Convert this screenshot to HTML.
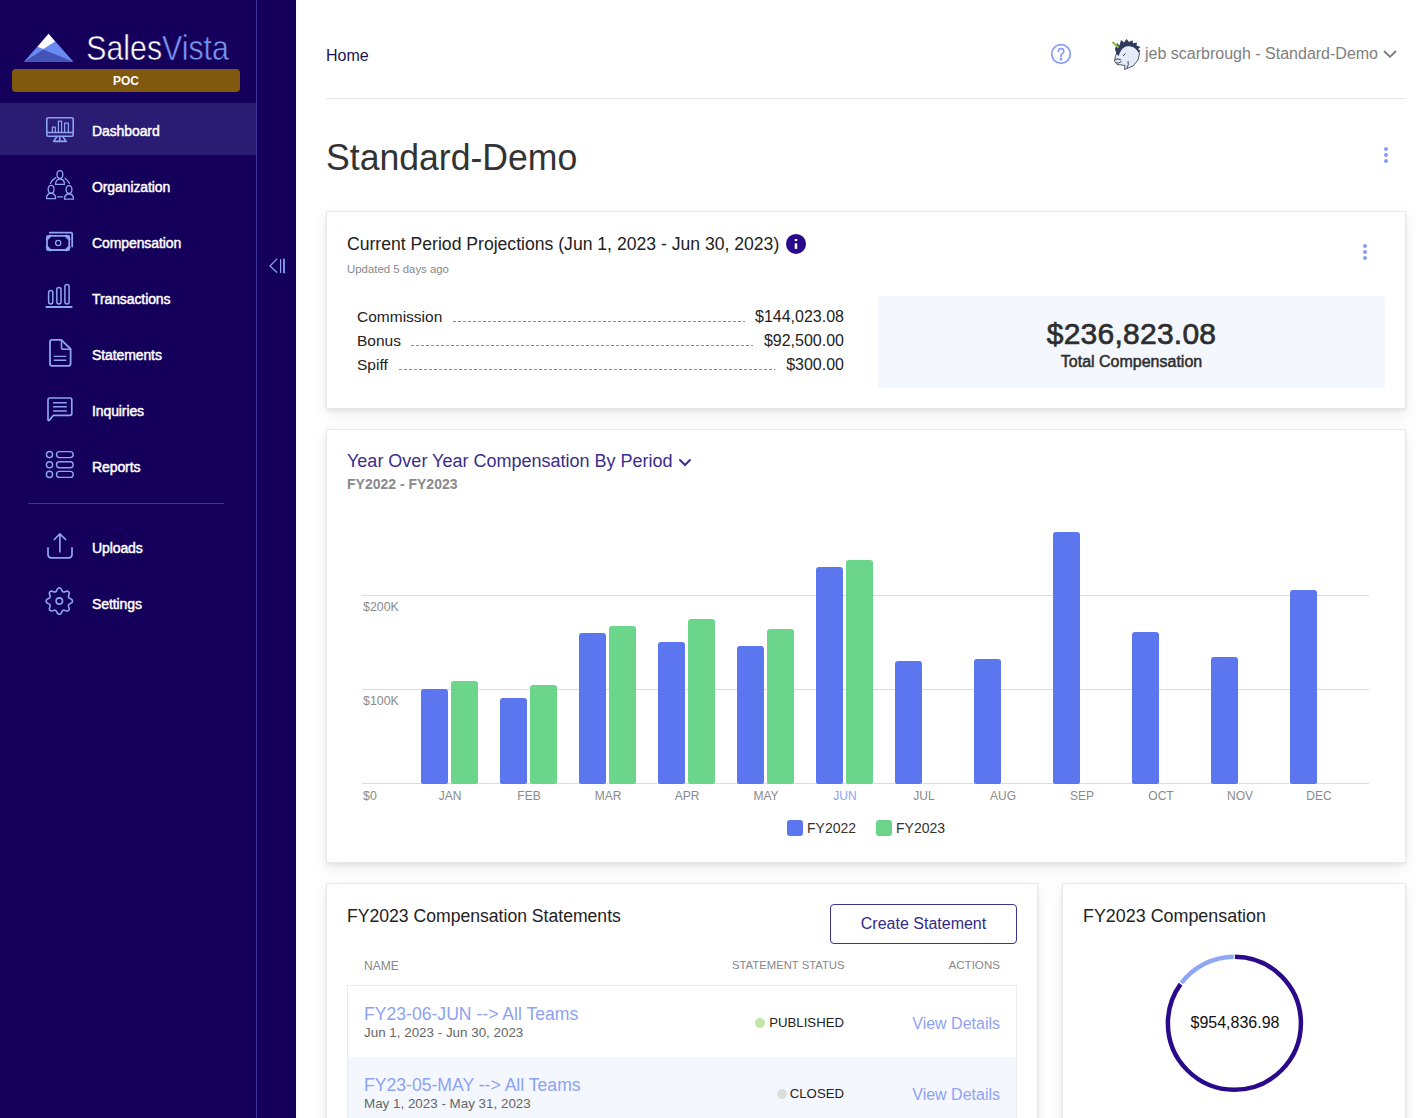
<!DOCTYPE html>
<html><head><meta charset="utf-8">
<style>
*{box-sizing:border-box;margin:0;padding:0}
html,body{width:1416px;height:1118px;overflow:hidden;background:#fff;font-family:"Liberation Sans",sans-serif}
.abs{position:absolute}
#sb{position:absolute;left:0;top:0;width:296px;height:1118px;background:#14005a}
#sbline{position:absolute;left:256px;top:0;width:1px;height:1118px;background:#3c3592}
.nav{position:absolute;left:0;width:256px;height:52px}
.nav.active{background:#2a1c72}
.lbl{position:absolute;left:92px;color:#fff;font-size:14px;font-weight:normal;-webkit-text-stroke:0.45px #fff;white-space:nowrap;line-height:16px;letter-spacing:-0.1px}
.card{position:absolute;background:#fff;border:1px solid #e8e8e8;box-shadow:0 2px 4px rgba(0,0,0,0.07),0 6px 16px rgba(0,0,0,0.07)}
.t{position:absolute;white-space:nowrap}
.bar{position:absolute;width:27px;border-radius:3px 3px 2px 2px}
.mlbl{position:absolute;top:789px;width:60px;text-align:center;font-size:12px;line-height:14px}
.grid{position:absolute;left:362px;width:1007px;height:1px;background:#dcdcdc}
.ylbl{position:absolute;left:363px;font-size:12.4px;line-height:14px;color:#8a8a8a}
.dots{position:absolute;height:1px;background-image:linear-gradient(to right,#8a8a8a 0,#8a8a8a 3px,transparent 3px);background-size:5px 1px;background-repeat:repeat-x}
.kebab{position:absolute;width:4px}
.kebab i{display:block;width:4px;height:4px;border-radius:2px;background:#8a9cf6;margin-bottom:2px}
</style></head>
<body>
<div id="sb">
  <div id="sbline"></div>
  <div class="nav active" style="top:103px"></div>
  <!-- logo -->
  <svg class="abs" style="left:0;top:0" width="256" height="100">
    <polygon points="24,61.8 48.6,33.8 73.4,61.8" fill="#6a8af2"/>
    <polygon points="24,61.8 43.3,49.4 73.4,61.8" fill="#4453b8"/>
    <polygon points="48.6,33.8 55,41.4 43.3,49.1 37.6,46.7" fill="#ffffff"/>
    <text x="86.3" y="59.6" font-family="Liberation Sans" font-size="35.5" textLength="142.5" lengthAdjust="spacingAndGlyphs" fill="#ffffff" stroke="#14005a" stroke-width="0.55">Sales<tspan fill="#7b95f2">Vista</tspan></text>
  </svg>
  <div class="abs" style="left:12px;top:69px;width:228px;height:23px;background:#80590f;border-radius:4px;color:#fff;font-size:12px;font-weight:bold;text-align:center;line-height:25px">POC</div>
  
<svg class="abs" style="left:0;top:0" width="256" height="640" fill="none" stroke="#8da3f5" stroke-width="1.6" stroke-linecap="round" stroke-linejoin="round">
 <g transform="translate(40,110)">
  <rect x="6.8" y="7.8" width="26.4" height="18.4" rx="1.5"/>
  <line x1="7" y1="22.5" x2="33" y2="22.5"/>
  <rect x="12.4" y="17.2" width="3" height="5.3" stroke-width="1.2"/>
  <rect x="18.4" y="11.2" width="3.2" height="11.3" stroke-width="1.2"/>
  <rect x="24.6" y="13.2" width="3.8" height="9.3" stroke-width="1.2"/>
  <path d="M17,26.5 L13.6,31.4 L26.2,31.4 L22.8,26.5 M19.8,26.5 L19.8,31"/>
 </g>
 <g transform="translate(40,166)" stroke-width="1.3">
  <ellipse cx="19.9" cy="8.6" rx="2.9" ry="3.9"/>
  <path d="M15.5,18.4 C15.5,14.8 17.5,13 19.9,13 C22.3,13 24.5,14.8 24.5,18.4 Z"/>
  <ellipse cx="11.1" cy="23.2" rx="2.9" ry="3.9"/>
  <path d="M6.5,32.6 C6.5,29.2 8.7,27.4 11.1,27.4 C13.5,27.4 15.6,29.2 15.6,32.6 Z"/>
  <ellipse cx="29" cy="23.6" rx="2.9" ry="3.9"/>
  <path d="M24.5,33.2 C24.5,29.8 26.6,28 29,28 C31.4,28 33.5,29.8 33.5,33.2 Z"/>
  <path d="M10.4,17.5 Q12.5,13.5 15.7,11.6"/>
  <path d="M25,12.2 Q28,14.2 29.5,17.6"/>
  <path d="M17.4,30.8 L22.6,30.8"/>
 </g>
 <g transform="translate(40,222)" stroke-width="1.8">
  <rect x="7" y="13.9" width="22.2" height="14.1" rx="1"/>
  <path d="M9.8,10.6 L31,10.6 Q32.2,10.6 32.2,11.8 L32.2,24.6"/>
  <circle cx="18.2" cy="21" r="2.6" stroke-width="1.3"/>
  <path d="M7,17 L10,14 M26.2,14 L29.2,17 M7,25 L10,28 M26.2,28 L29.2,25" stroke-width="2.6"/>
 </g>
 <g transform="translate(40,278)" stroke-width="1.5">
  <rect x="8.6" y="12.6" width="4.2" height="13.3" rx="2.1"/>
  <rect x="16.8" y="9.4" width="4.2" height="16.5" rx="2.1"/>
  <rect x="24.9" y="6.4" width="4.2" height="19.5" rx="2.1"/>
  <line x1="6.4" y1="29" x2="31.6" y2="29" stroke-width="2"/>
 </g>
 <g transform="translate(40,334)">
  <path d="M21.3,5.9 L12,5.9 Q10,5.9 10,7.9 L10,29.8 Q10,31.8 12,31.8 L28.6,31.8 Q30.6,31.8 30.6,29.8 L30.6,15 Z" stroke-width="1.8"/>
  <path d="M21.5,6.5 L21.5,13.4 Q21.5,15.2 23.3,15.2 L30.2,15.2" stroke-width="1.5"/>
  <line x1="14.3" y1="22.4" x2="25.8" y2="22.4" stroke-width="1.4"/>
  <line x1="14.3" y1="26.3" x2="25.8" y2="26.3" stroke-width="1.4"/>
 </g>
 <g transform="translate(40,390)">
  <path d="M10,8 L30,8 Q31.8,8 31.8,9.8 L31.8,23.6 Q31.8,25.4 30,25.4 L13.2,25.4 L9.6,30 Q8,31.4 8,29.4 L8,10 Q8,8 10,8 Z" stroke-width="1.7"/>
  <line x1="13.6" y1="12.7" x2="26.3" y2="12.7" stroke-width="1.5"/>
  <line x1="13.6" y1="16.8" x2="26.3" y2="16.8" stroke-width="1.5"/>
  <line x1="13.6" y1="20.9" x2="26.3" y2="20.9" stroke-width="1.5"/>
 </g>
 <g transform="translate(40,446)" stroke-width="1.4">
  <circle cx="9.5" cy="8.6" r="3.1"/><circle cx="9.5" cy="18.8" r="3.1"/><circle cx="9.5" cy="28.4" r="3.1"/>
  <rect x="16.5" y="5.6" width="16.7" height="6" rx="3"/>
  <rect x="16.5" y="15.8" width="16.7" height="6" rx="3"/>
  <rect x="16.5" y="25.4" width="16.7" height="6" rx="3"/>
 </g>
 <g transform="translate(40,527)" stroke-width="1.7">
  <path d="M19.9,24.7 L19.9,6.9 M14.3,12.5 L19.9,6.9 L25.6,12.5"/>
  <path d="M8,20.9 L8,27.6 Q8,30.9 11.3,30.9 L28.7,30.9 Q32,30.9 32,27.6 L32,20.9"/>
 </g>
 <g transform="translate(40,583)" stroke-width="1.6">
  <path d="M19.30,4.90 L20.15,5.09 L20.94,5.66 L21.56,6.72 L22.06,7.81 L22.57,8.48 L23.13,8.86 L23.80,8.98 L24.62,8.88 L25.74,8.45 L26.94,8.14 L27.90,8.30 L28.63,8.77 L29.10,9.50 L29.26,10.46 L28.95,11.66 L28.52,12.78 L28.42,13.60 L28.54,14.27 L28.92,14.83 L29.59,15.34 L30.68,15.84 L31.74,16.46 L32.31,17.25 L32.50,18.10 L32.31,18.95 L31.74,19.74 L30.68,20.36 L29.59,20.86 L28.92,21.37 L28.54,21.93 L28.42,22.60 L28.52,23.42 L28.95,24.54 L29.26,25.74 L29.10,26.70 L28.63,27.43 L27.90,27.90 L26.94,28.06 L25.74,27.75 L24.62,27.32 L23.80,27.22 L23.13,27.34 L22.57,27.72 L22.06,28.39 L21.56,29.48 L20.94,30.54 L20.15,31.11 L19.30,31.30 L18.45,31.11 L17.66,30.54 L17.04,29.48 L16.54,28.39 L16.03,27.72 L15.47,27.34 L14.80,27.22 L13.98,27.32 L12.86,27.75 L11.66,28.06 L10.70,27.90 L9.97,27.43 L9.50,26.70 L9.34,25.74 L9.65,24.54 L10.08,23.42 L10.18,22.60 L10.06,21.93 L9.68,21.37 L9.01,20.86 L7.92,20.36 L6.86,19.74 L6.29,18.95 L6.10,18.10 L6.29,17.25 L6.86,16.46 L7.92,15.84 L9.01,15.34 L9.68,14.83 L10.06,14.27 L10.18,13.60 L10.08,12.78 L9.65,11.66 L9.34,10.46 L9.50,9.50 L9.97,8.77 L10.70,8.30 L11.66,8.14 L12.86,8.45 L13.98,8.88 L14.80,8.98 L15.47,8.86 L16.03,8.48 L16.54,7.81 L17.04,6.72 L17.66,5.66 L18.45,5.09Z"/>
  <circle cx="19.3" cy="18.1" r="3.2"/>
 </g>
</svg>
  <span class="lbl" style="top:123px">Dashboard</span>
  <span class="lbl" style="top:179px">Organization</span>
  <span class="lbl" style="top:235px">Compensation</span>
  <span class="lbl" style="top:291px">Transactions</span>
  <span class="lbl" style="top:347px">Statements</span>
  <span class="lbl" style="top:403px">Inquiries</span>
  <span class="lbl" style="top:459px">Reports</span>
  <div class="abs" style="left:28px;top:503px;width:196px;height:1px;background:#3c3592"></div>
  <span class="lbl" style="top:540px">Uploads</span>
  <span class="lbl" style="top:596px">Settings</span>
  <svg class="abs" style="left:260px;top:250px" width="36" height="32" fill="none" stroke="#8ba1f5" stroke-width="1.2" stroke-linecap="round" stroke-linejoin="round">
    <path d="M16.7,9.2 L10,16 L16.7,22.3"/>
    <line x1="20.6" y1="9.5" x2="20.6" y2="22.5"/>
    <line x1="24" y1="9.5" x2="24" y2="22.5" stroke-width="1.8"/>
  </svg>
</div>

<!-- header -->
<div class="t" style="left:326px;top:46.5px;font-size:16px;line-height:18px;color:#1a1450">Home</div>
<svg class="abs" style="left:1048px;top:41px" width="26" height="26" fill="none" stroke="#8a9cf8" stroke-width="1.7">
  <circle cx="13" cy="13" r="9.3"/>
  <path d="M10.3,10.6 Q10.3,7.6 13,7.6 Q15.8,7.6 15.8,10.2 Q15.8,12 13.9,12.9 Q13,13.4 13,14.8 L13,15.6" stroke-linecap="round"/>
  <circle cx="13" cy="18.3" r="0.6" fill="#8a9cf8"/>
</svg>
<svg class="abs" style="left:1110px;top:37px" width="32" height="34">
  <path d="M9,12 L17,8 L25,10 L29.5,16 L28,23 L23,29 L14.5,32.5 L15,28.5 L12,28 L7,27.5 L4.5,24 L5.5,19 L7,15 Z" fill="#e6ebf9" stroke="#2b2f45" stroke-width="0.8" stroke-linejoin="round"/>
  <path d="M5,12 L7,6 L9.5,8.5 L11,3 L14,5.5 L16.5,2 L19,5 L22.5,3.2 L23,6.3 L27,5.5 L26.5,8.5 L30.5,10 L28,12 L30.5,14 L28.5,15.5 L27,13 L24,10.5 L20,9 L15.5,9.5 L12,12 L10,15.5 L8.5,19 L6.5,17 Z" fill="#2f3a5f"/>
  <path d="M2.5,5 L8.5,10.5" stroke="#8bc34a" stroke-width="2.2"/>
  <path d="M5,22.5 Q8,21 11,23 M6,26 Q9,26.5 11.5,24.5 M13,19 L15.5,16.5 M18,24 Q19,28 17,31" stroke="#2b2f45" stroke-width="0.9" fill="none"/>
</svg>
<div class="t" style="left:1145px;top:45px;font-size:16px;line-height:18px;color:#808080">jeb scarbrough - Standard-Demo</div>
<svg class="abs" style="left:1382px;top:48px" width="16" height="12" fill="none" stroke="#777" stroke-width="1.8" stroke-linecap="round"><path d="M2.5,3.5 L8,8.8 L13.5,3.5"/></svg>
<div class="abs" style="left:326px;top:98px;width:1080px;height:1px;background:#e6e6e6"></div>
<div class="t" style="left:326px;top:136.5px;font-size:37px;line-height:42px;color:#333;transform:scaleX(0.962);transform-origin:0 0">Standard-Demo</div>
<div class="kebab" style="left:1384px;top:147px"><i></i><i></i><i></i></div>

<!-- card 1 -->
<div class="card" style="left:326px;top:211px;width:1080px;height:198px"></div>
<div class="t" style="left:347px;top:234px;font-size:17.6px;line-height:20px;color:#222">Current Period Projections (Jun 1, 2023 - Jun 30, 2023)</div>
<svg class="abs" style="left:785px;top:233px" width="22" height="22"><circle cx="11" cy="10.9" r="10" fill="#290a8a"/><rect x="9.7" y="6" width="2.5" height="2" fill="#fff"/><rect x="9.7" y="10.3" width="2.5" height="5.6" fill="#fff"/></svg>
<div class="t" style="left:347px;top:262px;font-size:11.4px;line-height:14px;color:#888">Updated 5 days ago</div>
<div class="kebab" style="left:1363px;top:244px"><i></i><i></i><i></i></div>

<div class="t" style="left:357px;top:308px;font-size:15.5px;line-height:18px;color:#222">Commission</div>
<div class="dots" style="left:453px;top:321px;width:292px"></div>
<div class="t" style="left:743px;top:308px;width:101px;text-align:right;font-size:16px;line-height:18px;color:#222">$144,023.08</div>
<div class="t" style="left:357px;top:332px;font-size:15.5px;line-height:18px;color:#222">Bonus</div>
<div class="dots" style="left:411px;top:345px;width:342px"></div>
<div class="t" style="left:743px;top:332px;width:101px;text-align:right;font-size:16px;line-height:18px;color:#222">$92,500.00</div>
<div class="t" style="left:357px;top:356px;font-size:15.5px;line-height:18px;color:#222">Spiff</div>
<div class="dots" style="left:399px;top:369px;width:376px"></div>
<div class="t" style="left:743px;top:356px;width:101px;text-align:right;font-size:16px;line-height:18px;color:#222">$300.00</div>

<div class="abs" style="left:878px;top:296px;width:507px;height:92px;background:#f4f7fd"></div>
<div class="t" style="left:878px;top:317px;width:507px;text-align:center;font-size:30px;line-height:34px;font-weight:normal;-webkit-text-stroke:0.7px #2e2e2e;letter-spacing:0.25px;color:#2e2e2e">$236,823.08</div>
<div class="t" style="left:878px;top:353px;width:507px;text-align:center;font-size:16px;line-height:18px;font-weight:normal;-webkit-text-stroke:0.5px #2e2e2e;color:#2e2e2e">Total Compensation</div>

<!-- card 2 -->
<div class="card" style="left:326px;top:429px;width:1080px;height:434px"></div>
<div class="t" style="left:347px;top:451px;font-size:18px;line-height:20px;color:#3a2d8c">Year Over Year Compensation By Period</div>
<svg class="abs" style="left:677px;top:456px" width="16" height="14" fill="none" stroke="#3a2d8c" stroke-width="2" stroke-linecap="round"><path d="M3,4 L8,9 L13,4"/></svg>
<div class="t" style="left:347px;top:476px;font-size:14px;line-height:16px;font-weight:bold;color:#8a8a8a">FY2022 - FY2023</div>
<div class="grid" style="top:595px"></div>
<div class="grid" style="top:689px"></div>
<div class="grid" style="top:783px"></div>
<div class="ylbl" style="top:600px">$200K</div>
<div class="ylbl" style="top:694px">$100K</div>
<div class="ylbl" style="top:789px">$0</div>
<div class="bar" style="left:421px;top:689px;height:95px;background:#5b76ef"></div>
<div class="bar" style="left:500px;top:698px;height:86px;background:#5b76ef"></div>
<div class="bar" style="left:579px;top:633px;height:151px;background:#5b76ef"></div>
<div class="bar" style="left:658px;top:642px;height:142px;background:#5b76ef"></div>
<div class="bar" style="left:737px;top:646px;height:138px;background:#5b76ef"></div>
<div class="bar" style="left:816px;top:567px;height:217px;background:#5b76ef"></div>
<div class="bar" style="left:895px;top:661px;height:123px;background:#5b76ef"></div>
<div class="bar" style="left:974px;top:659px;height:125px;background:#5b76ef"></div>
<div class="bar" style="left:1053px;top:532px;height:252px;background:#5b76ef"></div>
<div class="bar" style="left:1132px;top:632px;height:152px;background:#5b76ef"></div>
<div class="bar" style="left:1211px;top:657px;height:127px;background:#5b76ef"></div>
<div class="bar" style="left:1290px;top:590px;height:194px;background:#5b76ef"></div>
<div class="bar" style="left:451px;top:681px;height:103px;background:#6bd58c"></div>
<div class="bar" style="left:530px;top:685px;height:99px;background:#6bd58c"></div>
<div class="bar" style="left:609px;top:626px;height:158px;background:#6bd58c"></div>
<div class="bar" style="left:688px;top:619px;height:165px;background:#6bd58c"></div>
<div class="bar" style="left:767px;top:629px;height:155px;background:#6bd58c"></div>
<div class="bar" style="left:846px;top:560px;height:224px;background:#6bd58c"></div>
<div class="mlbl" style="left:420px;color:#8a8a8a">JAN</div>
<div class="mlbl" style="left:499px;color:#8a8a8a">FEB</div>
<div class="mlbl" style="left:578px;color:#8a8a8a">MAR</div>
<div class="mlbl" style="left:657px;color:#8a8a8a">APR</div>
<div class="mlbl" style="left:736px;color:#8a8a8a">MAY</div>
<div class="mlbl" style="left:815px;color:#8ea2f4">JUN</div>
<div class="mlbl" style="left:894px;color:#8a8a8a">JUL</div>
<div class="mlbl" style="left:973px;color:#8a8a8a">AUG</div>
<div class="mlbl" style="left:1052px;color:#8a8a8a">SEP</div>
<div class="mlbl" style="left:1131px;color:#8a8a8a">OCT</div>
<div class="mlbl" style="left:1210px;color:#8a8a8a">NOV</div>
<div class="mlbl" style="left:1289px;color:#8a8a8a">DEC</div>
<div class="abs" style="left:787px;top:820px;width:16px;height:16px;border-radius:3px;background:#5b76ef"></div>
<div class="t" style="left:807px;top:820px;font-size:14px;line-height:16px;color:#333">FY2022</div>
<div class="abs" style="left:876px;top:820px;width:16px;height:16px;border-radius:3px;background:#6bd58c"></div>
<div class="t" style="left:896px;top:820px;font-size:14px;line-height:16px;color:#333">FY2023</div>

<!-- card 3 -->
<div class="card" style="left:326px;top:883px;width:712px;height:300px"></div>
<div class="t" style="left:347px;top:906px;font-size:17.6px;line-height:20px;color:#222">FY2023 Compensation Statements</div>
<div class="abs" style="left:830px;top:904px;width:187px;height:40px;border:1px solid #3a3590;border-radius:4px;color:#332a8a;font-size:16px;line-height:38px;text-align:center">Create Statement</div>
<div class="t" style="left:364px;top:958.5px;font-size:12px;line-height:14px;color:#888">NAME</div>
<div class="t" style="left:732px;top:958px;font-size:11.3px;line-height:14px;color:#888">STATEMENT STATUS</div>
<div class="t" style="left:900px;top:958px;width:100px;text-align:right;font-size:11.6px;line-height:14px;color:#888">ACTIONS</div>
<div class="abs" style="left:347px;top:985px;width:670px;height:140px;border:1px solid #ececec;background:#fff"></div>
<div class="abs" style="left:348px;top:1057px;width:668px;height:70px;background:#f4f7fd"></div>
<div class="t" style="left:364px;top:1004px;font-size:17.6px;line-height:20px;color:#8ea2f4">FY23-06-JUN --&gt; All Teams</div>
<div class="t" style="left:364px;top:1025px;font-size:13.4px;line-height:16px;color:#666">Jun 1, 2023 - Jun 30, 2023</div>
<div class="abs" style="left:755px;top:1018px;width:10px;height:10px;border-radius:5px;background:#c2e5a8"></div>
<div class="t" style="left:744px;top:1015px;width:100px;text-align:right;font-size:13.2px;line-height:16px;color:#222">PUBLISHED</div>
<div class="t" style="left:880px;top:1014.5px;width:120px;text-align:right;font-size:16px;line-height:18px;color:#8ea2f4">View Details</div>
<div class="t" style="left:364px;top:1075px;font-size:17.6px;line-height:20px;color:#8ea2f4">FY23-05-MAY --&gt; All Teams</div>
<div class="t" style="left:364px;top:1096px;font-size:13.4px;line-height:16px;color:#666">May 1, 2023 - May 31, 2023</div>
<div class="abs" style="left:777px;top:1089px;width:10px;height:10px;border-radius:5px;background:#dddddd"></div>
<div class="t" style="left:744px;top:1086px;width:100px;text-align:right;font-size:13.2px;line-height:16px;color:#222">CLOSED</div>
<div class="t" style="left:880px;top:1085.5px;width:120px;text-align:right;font-size:16px;line-height:18px;color:#8ea2f4">View Details</div>

<!-- card 4 -->
<div class="card" style="left:1062px;top:883px;width:344px;height:300px"></div>
<div class="t" style="left:1083px;top:906px;font-size:17.9px;line-height:20px;color:#222">FY2023 Compensation</div>
<svg class="abs" style="left:1162px;top:951px" width="144" height="144" fill="none">
  <circle cx="72.4" cy="72.2" r="66.5" stroke="#290a8a" stroke-width="4.5" stroke-dasharray="354 64" stroke-dashoffset="-0.5" transform="rotate(-90 72.4 72.2)"/>
  <circle cx="72.4" cy="72.2" r="66.5" stroke="#8fa6f5" stroke-width="4.5" stroke-dasharray="60.5 357.3" stroke-dashoffset="-356" transform="rotate(-90 72.4 72.2)"/>
</svg>
<div class="t" style="left:1135px;top:1014px;width:200px;text-align:center;font-size:16px;line-height:18px;color:#111">$954,836.98</div>
</body></html>
